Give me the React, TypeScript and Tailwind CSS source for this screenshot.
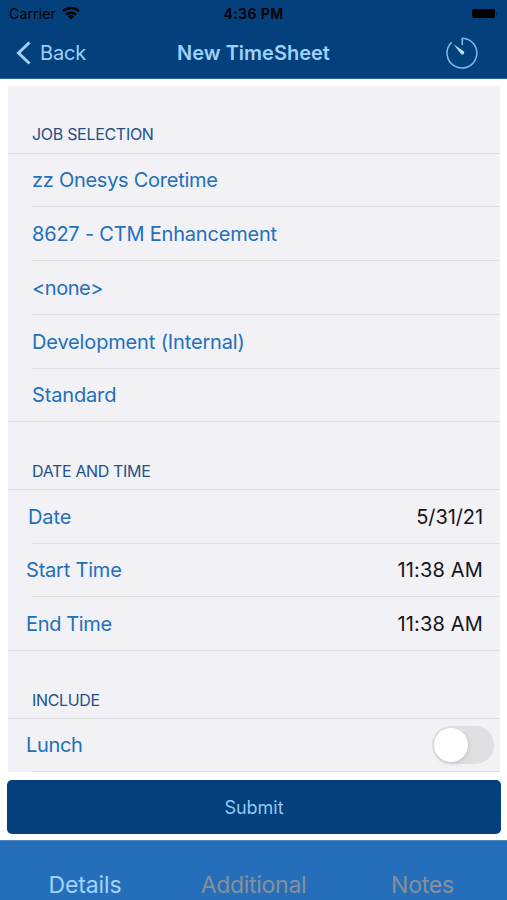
import React, { useState } from "react";
import clsx from "clsx";

type RowProps = {
  label: string;
  value?: string;
  className: string;
  labelClassName?: string;
  valueClassName?: string;
  last?: boolean;
  children?: React.ReactNode;
};

const JOB_ROWS = [
  { label: "zz Onesys Coretime", className: "h-[53px]", text: "tracking-[-0.27px]" },
  { label: "8627 - CTM Enhancement", className: "h-[54px]", text: "tracking-[-0.2px]" },
  { label: "<none>", className: "h-[54px]", text: "tracking-[-0.45px]" },
  { label: "Development (Internal)", className: "h-[54px]", text: "tracking-[-0.15px]" },
  { label: "Standard", className: "h-[53px]", text: "tracking-[-0.15px]" },
];

const TABS = [
  { name: "Details", className: "pl-[1px] tracking-[-0.1px]" },
  { name: "Additional", className: "tracking-[-0.3px]" },
  { name: "Notes", className: "tracking-[-0.2px]" },
];

function StatusBar() {
  return (
    <div className="grid grid-cols-3 items-center h-[27px] px-[9px] text-black">
      <div className="flex items-center gap-[6px]">
        <span className="text-[14px] tracking-[0.15px]">Carrier</span>
        <svg width="18" height="14" viewBox="0 0 18 14" fill="none" stroke="currentColor" strokeWidth="2.5" className="-mt-px">
          <path d="M1 5.2a11.5 11.5 0 0 1 16 0" />
          <path d="M4 8.7a7.2 7.2 0 0 1 10 0" />
          <path d="M9 13.6 5.9 10.4a4.6 4.6 0 0 1 6.2 0z" fill="currentColor" stroke="none" />
        </svg>
      </div>
      <span className="text-center text-[14px] font-semibold tracking-[0.4px]">4:36 PM</span>
      <div className="flex justify-end items-center gap-[1px]">
        <div className="w-[23px] h-[9px] rounded-[2px] bg-black" />
        <div className="w-[2px] h-[4px] rounded-r bg-black/30" />
      </div>
    </div>
  );
}

function NavBar() {
  return (
    <div className="grid grid-cols-3 items-center h-[51px] px-[16px] text-[#9fd0fb]">
      <button className="flex items-center gap-[9px] text-[20px] tracking-[-0.2px]">
        <svg width="15" height="24" viewBox="0 0 15 24" fill="none" stroke="currentColor" strokeWidth="3">
          <path d="M13.5 1.5 2.5 12l11 10.5" />
        </svg>
        Back
      </button>
      <h1 className="text-center whitespace-nowrap text-[20px] font-semibold">New TimeSheet</h1>
      <button className="justify-self-end mr-[12px]">
        <svg width="34" height="34" viewBox="0 0 34 34" fill="none" stroke="#82b9ea" strokeWidth="1.5">
          <path d="M17.3 9V2.2a14.9 14.9 0 1 1-10.7 4.2" />
          <path d="M8.5 8.3 19 15.6a2 2 0 0 1-2.7 2.7z" fill="#b5e3fa" stroke="none" />
        </svg>
      </button>
    </div>
  );
}

function SectionTitle({ title, className }: { title: string; className: string }) {
  return (
    <h2
      className={clsx(
        "flex items-end pl-[24px] pb-[6px] border-b border-[#dfdfe4] text-[16px] leading-6 text-[#1f508a]",
        className
      )}
    >
      {title}
    </h2>
  );
}

function Row({ label, value, className, labelClassName, valueClassName, last, children }: RowProps) {
  return (
    <div className={clsx("flex flex-col", className)}>
      <div className="flex flex-1 items-center justify-between pr-[17px] text-[20px]">
        <span className={clsx("whitespace-nowrap text-[#226fba]", labelClassName)}>{label}</span>
        {value && <span className={clsx("text-[#151517]", valueClassName)}>{value}</span>}
        {children}
      </div>
      <div className={clsx("h-px bg-[#dfdfe4]", !last && "ml-[24px]")} />
    </div>
  );
}

export default function App() {
  const [activeTab, setActiveTab] = useState("Details");
  const [lunch, setLunch] = useState(false);

  return (
    <div className="flex flex-col w-[507px] h-[900px] overflow-hidden bg-white font-['Inter',sans-serif]">
      <header className="h-[79px] shrink-0 bg-[#04407c] border-b border-[#2b659f]">
        <StatusBar />
        <NavBar />
      </header>

      <main className="mt-[7px] ml-[8px] mr-[7px] h-[686px] shrink-0 bg-[#f1f1f6]">
        <SectionTitle title="JOB SELECTION" className="h-[68px] pb-[7px] tracking-[-0.3px]" />
        {JOB_ROWS.map((row, idx) => (
          <Row
            key={row.label}
            label={row.label}
            className={row.className}
            labelClassName={clsx("pl-[24px]", row.text)}
            last={idx === JOB_ROWS.length - 1}
          />
        ))}

        <SectionTitle title="DATE AND TIME" className="h-[68px] tracking-[-0.35px]" />
        <Row
          label="Date"
          value="5/31/21"
          className="h-[54px]"
          labelClassName="pl-[20px] tracking-[-0.1px]"
          valueClassName="tracking-[-0.1px]"
        />
        <Row
          label="Start Time"
          value="11:38 AM"
          className="h-[53px]"
          labelClassName="pl-[18px] tracking-[-0.2px]"
          valueClassName="tracking-[0.15px]"
        />
        <Row
          label="End Time"
          value="11:38 AM"
          className="h-[54px]"
          labelClassName="pl-[18px] tracking-[-0.35px]"
          valueClassName="tracking-[0.15px]"
          last
        />

        <SectionTitle title="INCLUDE" className="h-[68px] tracking-[-0.35px]" />
        <Row label="Lunch" className="h-[53px]" labelClassName="pl-[18px] pb-[1px] tracking-[-0.35px]">
          <button
            onClick={() => setLunch(!lunch)}
            className={clsx(
              "flex items-center w-[62px] h-[38px] -mr-[11px] px-[2px] rounded-full",
              lunch ? "bg-green-500 justify-end" : "bg-[#dfdfe3]"
            )}
          >
            <span className="size-[34px] rounded-full bg-white shadow-[1px_2px_4px_rgba(0,0,0,0.1)]" />
          </button>
        </Row>
      </main>

      <button className="mt-[8px] ml-[7px] mr-[6px] h-[54px] shrink-0 rounded-[5px] bg-[#04407c] text-[18px] text-[#93c8f6]">
        Submit
      </button>

      <nav className="mt-[6px] grid grid-cols-3 flex-1 pt-[27px] bg-[#256fba] border-t border-[#4a87c4]">
        {TABS.map((tab) => (
          <button
            key={tab.name}
            onClick={() => setActiveTab(tab.name)}
            className={clsx(
              "text-[23px] leading-[34px]",
              tab.className,
              activeTab === tab.name ? "text-[#a3d3fd]" : "text-[#8a8f98]"
            )}
          >
            {tab.name}
          </button>
        ))}
      </nav>
    </div>
  );
}
